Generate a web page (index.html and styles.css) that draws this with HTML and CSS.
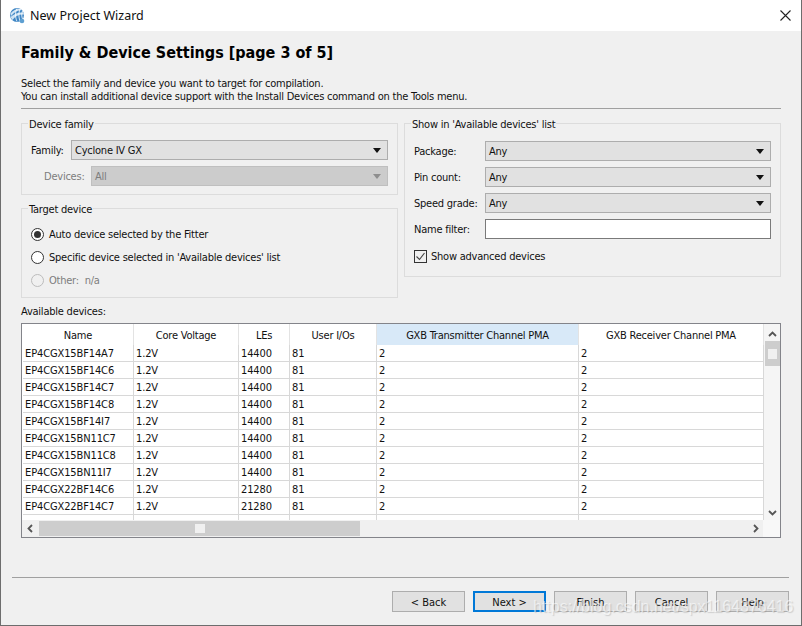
FILE: index.html
```html
<!DOCTYPE html>
<html lang="en">
<head>
<meta charset="utf-8">
<title>New Project Wizard</title>
<link rel="stylesheet" href="styles.css">
</head>
<body>
<div class="window">
  <header class="titlebar">
    <svg class="logo" width="17" height="17" viewBox="0 0 17 17">
      <circle cx="8" cy="8" r="7" fill="#3f86c4"/>
      <path d="M1.500 6.500C4 3 8 1.500 11.500 1.800L13 3C9 3 5 5 2 9ZM1.500 10C5 7 9 5 14.500 5.500L15 7.500C10 7 6 9 3.500 13Z" fill="#cfe3f3"/>
      <path d="M8 1.500C6 5 6 10 8 14.500M11 2C9.500 6 9.500 10 11 14M13.500 4C12.500 7 12.500 9 13.500 12" stroke="#fff" stroke-width=".8" fill="none"/>
      <circle cx="13" cy="14" r="2.300" fill="#5d9fd1"/>
    </svg>
    <span class="titletext">New Project Wizard</span>
    <svg class="close" width="11" height="11" viewBox="0 0 11 11"><path d="M.5.500l10 10M10.500.500l-10 10" stroke="#222" stroke-width="1.100" fill="none"/></svg>
  </header>
  <main class="content">
    <h1 class="heading">Family &amp; Device Settings [page 3 of 5]</h1>
    <p class="intro">Select the family and device you want to target for compilation.<br>You can install additional device support with the Install Devices command on the Tools menu.</p>
    <hr class="rule">
    <div class="groups">
      <div class="col-left">
        <fieldset class="group group-family">
          <legend>Device family</legend>
          <div class="field">
            <label class="lbl-family">Family:</label>
            <div class="combo"><span>Cyclone IV GX</span><i class="caret"></i></div>
          </div>
          <div class="field field-devices">
            <label class="lbl-devices">Devices:</label>
            <div class="combo disabled"><span>All</span><i class="caret"></i></div>
          </div>
        </fieldset>
        <fieldset class="group group-target">
          <legend>Target device</legend>
          <div class="radio"><i class="dot on"></i><span>Auto device selected by the Fitter</span></div>
          <div class="radio"><i class="dot"></i><span>Specific device selected in 'Available devices' list</span></div>
          <div class="radio off"><i class="dot"></i><span>Other:&nbsp; n/a</span></div>
        </fieldset>
      </div>
      <fieldset class="group group-show">
        <legend>Show in 'Available devices' list</legend>
        <div class="row-show"><label>Package:</label><div class="combo"><span>Any</span><i class="caret"></i></div></div>
        <div class="row-show"><label>Pin count:</label><div class="combo"><span>Any</span><i class="caret"></i></div></div>
        <div class="row-show"><label>Speed grade:</label><div class="combo"><span>Any</span><i class="caret"></i></div></div>
        <div class="row-show"><label>Name filter:</label><div class="input"></div></div>
        <div class="check">
          <svg width="13" height="13" viewBox="0 0 13 13"><rect x=".5" y=".5" width="12" height="12" fill="#f0f0f0" stroke="#333"/><path d="M2.500 6.500l3 3 5-6.500" stroke="#444" stroke-width="1.100" fill="none"/></svg>
          <span>Show advanced devices</span>
        </div>
      </fieldset>
    </div>
    <div class="avail-label">Available devices:</div>
    <div class="tablebox">
      <div class="tablerow">
        <div class="tableclip">
          <table class="devices">
            <colgroup><col class="c1"><col class="c2"><col class="c3"><col class="c4"><col class="c5"><col class="c6"></colgroup>
            <thead><tr><th>Name</th><th>Core Voltage</th><th>LEs</th><th>User I/Os</th><th class="sorted">GXB Transmitter Channel PMA</th><th>GXB Receiver Channel PMA</th></tr></thead>
            <tbody>
              <tr><td>EP4CGX15BF14A7</td><td>1.2V</td><td>14400</td><td>81</td><td>2</td><td>2</td></tr>
              <tr><td>EP4CGX15BF14C6</td><td>1.2V</td><td>14400</td><td>81</td><td>2</td><td>2</td></tr>
              <tr><td>EP4CGX15BF14C7</td><td>1.2V</td><td>14400</td><td>81</td><td>2</td><td>2</td></tr>
              <tr><td>EP4CGX15BF14C8</td><td>1.2V</td><td>14400</td><td>81</td><td>2</td><td>2</td></tr>
              <tr><td>EP4CGX15BF14I7</td><td>1.2V</td><td>14400</td><td>81</td><td>2</td><td>2</td></tr>
              <tr><td>EP4CGX15BN11C7</td><td>1.2V</td><td>14400</td><td>81</td><td>2</td><td>2</td></tr>
              <tr><td>EP4CGX15BN11C8</td><td>1.2V</td><td>14400</td><td>81</td><td>2</td><td>2</td></tr>
              <tr><td>EP4CGX15BN11I7</td><td>1.2V</td><td>14400</td><td>81</td><td>2</td><td>2</td></tr>
              <tr><td>EP4CGX22BF14C6</td><td>1.2V</td><td>21280</td><td>81</td><td>2</td><td>2</td></tr>
              <tr><td>EP4CGX22BF14C7</td><td>1.2V</td><td>21280</td><td>81</td><td>2</td><td>2</td></tr>
              <tr><td>&nbsp;</td><td></td><td></td><td></td><td></td><td></td></tr>
            </tbody>
          </table>
        </div>
        <div class="vscroll">
          <svg class="arrow" width="9" height="6" viewBox="0 0 9 6"><path d="M1 5l3.500-3.500L8 5" stroke="#555" stroke-width="1.800" fill="none"/></svg>
          <div class="vthumb"><i></i></div>
          <svg class="arrow arrow-down" width="9" height="6" viewBox="0 0 9 6"><path d="M1 1l3.500 3.500L8 1" stroke="#555" stroke-width="1.800" fill="none"/></svg>
        </div>
      </div>
      <div class="hscroll">
        <svg class="harrow" width="6" height="9" viewBox="0 0 6 9"><path d="M5 1L1.500 4.500 5 8" stroke="#555" stroke-width="1.800" fill="none"/></svg>
        <div class="hthumb"><i></i></div>
        <svg class="harrow harrow-right" width="6" height="9" viewBox="0 0 6 9"><path d="M1 1l3.500 3.500L1 8" stroke="#555" stroke-width="1.800" fill="none"/></svg>
        <div class="corner"></div>
      </div>
    </div>
  </main>
  <footer class="footer">
    <hr class="rule rule-foot">
    <div class="buttons">
      <button class="btn">&lt; Back</button>
      <button class="btn primary">Next &gt;</button>
      <button class="btn">Finish</button>
      <button class="btn">Cancel</button>
      <button class="btn">Help</button>
    </div>
  </footer>
  <div class="watermark">https://blog.csdn.net/spx1164376416</div>
</div>
</body>
</html>
```
FILE: styles.css
```css
* { box-sizing: border-box; }
html, body { margin: 0; padding: 0; }
body {
  width: 802px;
  height: 626px;
  overflow: hidden;
  font-family: "DejaVu Sans Condensed", "DejaVu Sans", sans-serif;
  font-stretch: condensed;
  font-size: 11px;
  letter-spacing: -0.23px;
  color: #111;
}
.window {
  position: relative;
  width: 802px;
  height: 626px;
  display: flex;
  flex-direction: column;
  background: #f0f0f0;
  border: 1px solid #6d6d6d;
  border-top: 0;
  overflow: hidden;
}
.titlebar {
  height: 31px;
  flex: none;
  display: flex;
  align-items: center;
  background: #fff;
  padding: 0 10px 0 8px;
}
.logo { margin-right: 4px; }
.titletext { font-family: "Noto Sans", sans-serif; font-stretch: normal; font-size: 12.500px; letter-spacing: 0; color: #111; flex: 1; }
.content { flex: 1; padding: 0 20px; display: flex; flex-direction: column; }
.heading {
  font-size: 16px;
  font-weight: bold;
  letter-spacing: 0;
  margin: 13px 0 0;
  line-height: 18px;
  color: #000;
  height: 18px;
}
.intro { margin: 15px 0 0; line-height: 13px; font-size: 11px; }
.rule { border: 0; height: 1px; background: #a0a0a0; margin: 5px 0 0; }
.groups { display: flex; gap: 6px; width: 760px; margin-top: 7px; }
.col-left { width: 377px; display: flex; flex-direction: column; gap: 6px; }
.group {
  border: 1px solid #dcdcdc;
  margin: 0;
  padding: 0 9px;
  min-width: 0;
}
.group legend { position: relative; top: 2px; padding: 0 1px; margin-left: -3px; line-height: 14px; font-size: 11px; }
.group-family { height: 79px; padding-top: 10px; }
.group-target { height: 97px; padding-top: 8px; }
.group-show { width: 377px; height: 161px; padding-top: 11px; }
.field { display: flex; align-items: center; height: 20px; }
.field-devices { margin-top: 6px; }
.lbl-family { width: 40px; flex: none; }
.lbl-devices { width: 60px; flex: none; padding-left: 13px; color: #7d7d7d; }
.combo {
  flex: 1;
  height: 20px;
  display: flex;
  align-items: center;
  justify-content: space-between;
  background: #e1e1e1;
  border: 1px solid #adadad;
  padding: 0 6px 0 3px;
}
.caret { width: 0; height: 0; border-left: 4px solid transparent; border-right: 4px solid transparent; border-top: 5px solid #111; }
.combo.disabled { background: #ccc; border-color: #bfbfbf; color: #7d7d7d; }
.combo.disabled .caret { border-top-color: #8e8e8e; }
.radio { display: flex; align-items: center; height: 23px; gap: 5px; }
.dot {
  width: 13px; height: 13px; border-radius: 50%;
  border: 1px solid #333; background: #fff; position: relative; flex: none;
}
.dot.on::after { content: ""; position: absolute; left: 2px; top: 2px; width: 7px; height: 7px; border-radius: 50%; background: #333; }
.radio.off { color: #7d7d7d; }
.radio.off .dot { border-color: #bcbcbc; background: #f0f0f0; }
.row-show { display: flex; align-items: center; height: 20px; margin-bottom: 6px; }
.row-show label { width: 71px; flex: none; }
.input { flex: 1; height: 20px; background: #fff; border: 1px solid #7a7a7a; }
.check { display: flex; align-items: center; gap: 4px; margin-top: 10px; height: 14px; }
.avail-label { margin-top: 7px; line-height: 14px; height: 14px; }
.tablebox {
  width: 760px; height: 215px; margin-top: 4px;
  border: 1px solid #83848a;
  display: flex; flex-direction: column;
  background: #f0f0f0;
}
.tablerow { display: flex; height: 196px; background: #fff; }
.tableclip { width: 742px; height: 196px; overflow: hidden; padding-left: 1px; background: #fff; }
.devices { border-collapse: separate; border-spacing: 0; table-layout: fixed; width: 741px; font-size: 11px; }
.c1 { width: 111px; } .c2 { width: 105px; } .c3 { width: 51px; } .c4 { width: 87px; } .c5 { width: 202px; } .c6 { width: 185px; }
.devices th {
  font-weight: normal; height: 21px; padding: 1px 0 0; text-align: center;
  border-right: 1px solid #e3e3e3; background: #fff;
}
.devices th.sorted { background: #d8e9f8; }
.devices td {
  height: 17px; padding: 1px 0 0 2px; line-height: 14px; white-space: nowrap; letter-spacing: -0.12px;
  border-right: 1px solid #d8d8d8; border-bottom: 1px solid #d8d8d8;
}
.vscroll { flex: 1; background: #f5f5f5; display: flex; flex-direction: column; align-items: center; padding-top: 7px; }
.vthumb { width: 15px; height: 25px; margin-top: 4px; background: #cdcdcd; display: flex; justify-content: center; align-items: center; }
.vthumb i { width: 9px; height: 10px; background: #f0f0f0; }
.arrow { flex: none; }
.arrow-down { margin-top: auto; margin-bottom: 4px; }
.hscroll { height: 17px; display: flex; align-items: center; padding-left: 5px; }
.hthumb { width: 321px; height: 15px; margin-left: 6px; background: #cdcdcd; display: flex; justify-content: center; align-items: center; }
.hthumb i { width: 10px; height: 9px; background: #f0f0f0; }
.harrow { flex: none; }
.harrow-right { margin-left: auto; margin-right: 4px; }
.corner { width: 17px; height: 17px; background: #f8f8f8; }
.footer { flex: none; height: 48px; padding: 0 12px 0 11px; }
.rule-foot { margin: 0; }
.buttons { display: flex; justify-content: flex-end; gap: 8px; margin-top: 13px; }
.btn {
  width: 73px; height: 21px; padding: 2px 0 0;
  font: inherit; color: #111;
  background: #e1e1e1; border: 1px solid #adadad;
}
.btn.primary { border: 2px solid #0078d7; }
.watermark {
  position: absolute; left: 532px; top: 598px;
  font-family: "Liberation Sans", sans-serif;
  font-stretch: normal;
  font-size: 16px; letter-spacing: 0;
  color: rgba(255, 255, 255, .6);
  text-shadow: 1px 1px 1px rgba(130, 130, 130, .3);
  white-space: nowrap;
}
```
